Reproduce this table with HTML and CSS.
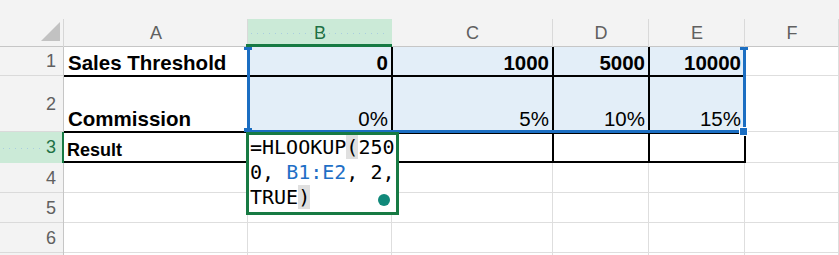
FILE: index.html
```html
<!DOCTYPE html>
<html lang="en">
<head>
<meta charset="utf-8">
<title>Commission lookup</title>
<link rel="stylesheet" href="styles.css">
</head>
<body>
<div class="sheet">
  <div class="grid">
    <div class="corner"><svg width="64" height="28" viewBox="0 0 64 28"><polygon points="41,22 60,22 60,3" fill="#c2c2c2"/></svg></div>
    <div class="ch">A</div>
    <div class="ch ch-on">B</div>
    <div class="ch">C</div>
    <div class="ch">D</div>
    <div class="ch">E</div>
    <div class="ch">F</div>

    <div class="rh">1</div>
    <div class="c bold kb">Sales Threshold</div>
    <div class="c bold sel num kb kr">0</div>
    <div class="c bold sel num kb kl kr">1000</div>
    <div class="c bold sel num kb kl kr">5000</div>
    <div class="c bold sel num kb kl">10000</div>
    <div class="c"></div>

    <div class="rh">2</div>
    <div class="c bold kt kb">Commission</div>
    <div class="c sel num kt kr">0%</div>
    <div class="c sel num kt kl kr">5%</div>
    <div class="c sel num kt kl kr">10%</div>
    <div class="c sel num kt kl">15%</div>
    <div class="c"></div>

    <div class="rh rh-on">3</div>
    <div class="c bold small kt kb2">Result</div>
    <div class="c"></div>
    <div class="c kt2 kb2 kl kr"></div>
    <div class="c kt2 kb2 kl kr"></div>
    <div class="c kt2 kb2 kl kr"></div>
    <div class="c kl"></div>

    <div class="rh">4</div>
    <div class="c"></div><div class="c"></div><div class="c"></div><div class="c"></div><div class="c"></div><div class="c"></div>

    <div class="rh">5</div>
    <div class="c"></div><div class="c"></div><div class="c"></div><div class="c"></div><div class="c"></div><div class="c"></div>

    <div class="rh">6</div>
    <div class="c"></div><div class="c"></div><div class="c"></div><div class="c"></div><div class="c"></div><div class="c"></div>

    <div class="rh"></div>
    <div class="c"></div><div class="c"></div><div class="c"></div><div class="c"></div><div class="c"></div><div class="c"></div>
  </div>

  <div class="selection"></div>
  <div class="handle handle-tl"></div>
  <div class="handle handle-tr"></div>
  <div class="handle handle-bl"></div>
  <div class="handle handle-br"></div>

  <div class="editor">
    <div class="fx">=HLOOKUP<span class="paren">(</span>250</div>
    <div class="fx">0, <span class="ref">B1:E2</span>, 2,</div>
    <div class="fx">TRUE<span class="paren">)</span></div>
    <span class="dot"></span>
  </div>
</div>
</body>
</html>
```

FILE: styles.css
```css
html, body {
  margin: 0;
  padding: 0;
  background: #ffffff;
  overflow: hidden;
}

.sheet {
  position: relative;
  width: 839px;
  height: 255px;
  overflow: hidden;
  background: linear-gradient(#f3f3f3 0 47px, #ffffff 47px);
  font-family: "Liberation Sans", Arial, sans-serif;
}

.grid {
  display: grid;
  grid-template-columns: 64px 184px 144px 161px 96px 96px 94px;
  grid-template-rows: 28px 29px 56px 31px 30px 30px 30px 30px;
  padding-top: 19px;
}

/* header row */
.corner {
  background: #f3f3f3;
  box-shadow: inset -1px 0 0 0 #d6d6d6, inset 0 -1px 0 0 #c6c6c6;
}
.corner svg { display: block; }

.ch {
  display: flex;
  align-items: center;
  justify-content: center;
  background: #f3f3f3;
  color: #606060;
  font-size: 18px;
  box-shadow: inset -1px 0 0 0 #d9d9d9, inset 0 -1px 0 0 #c6c6c6;
}

.ch-on {
  position: relative;
  background: #cbead7;
  color: #1e7145;
  box-shadow: none;
}
.ch-on::before {
  content: "";
  position: absolute;
  left: 0;
  right: 6px;
  top: 14px;
  height: 1px;
  background: repeating-linear-gradient(to right, transparent 0 3px, #a9cde0 3px 4px, transparent 4px 6px);
}
.ch-on::after {
  content: "";
  position: absolute;
  left: -2px;
  right: 0;
  bottom: 0;
  height: 3px;
  background: #177a43;
}

/* row header column */
.rh {
  display: flex;
  align-items: center;
  justify-content: flex-end;
  padding-right: 8px;
  background: #f3f3f3;
  color: #606060;
  font-size: 18px;
  box-shadow: inset -1px 0 0 0 #c6c6c6, inset 0 -1px 0 0 #dadada;
}

.rh-on {
  position: relative;
  background: #cbead7;
  color: #1e7145;
  box-shadow: inset -2px 0 0 0 #177a43;
}
.rh-on::before {
  content: "";
  position: absolute;
  left: 0;
  right: 24px;
  top: 16px;
  height: 1px;
  background: repeating-linear-gradient(to right, transparent 0 3px, #a9cde0 3px 4px, transparent 4px 6px);
}

/* cells */
.c {
  --t: 0px;
  --l: 0px;
  --r: 1px;
  --rc: #dedede;
  --b: 1px;
  --bc: #dedede;
  display: flex;
  align-items: flex-end;
  padding: 0 4px 3px 4px;
  font-size: 20.5px;
  line-height: 1;
  color: #000000;
  white-space: nowrap;
  box-shadow:
    inset 0 var(--t) 0 0 #000000,
    inset var(--l) 0 0 0 #000000,
    inset calc(var(--r) * -1) 0 0 0 var(--rc),
    inset 0 calc(var(--b) * -1) 0 0 var(--bc);
}

.bold { font-weight: 700; }
.small { font-size: 18px; padding-left: 3px; padding-bottom: 4px; }
.num { justify-content: flex-end; }
.sel { background: #e3eef8; }

.kt { --t: 1px; }
.kt2 { --t: 2px; }
.kl { --l: 1px; }
.kr { --r: 1px; --rc: #000000; }
.kb { --b: 1px; --bc: #000000; }
.kb2 { --b: 2px; --bc: #000000; }

/* selected range B1:E2 */
.selection {
  position: absolute;
  left: 247px;
  top: 47px;
  width: 499px;
  height: 86px;
  box-sizing: border-box;
  border: 3px solid #1b6ec2;
  border-top: none;
  z-index: 2;
}

.handle {
  position: absolute;
  background: #1b6ec2;
  z-index: 3;
}
.handle-tl { left: 244px; top: 47px; width: 8px; height: 3px; }
.handle-tr { left: 740px; top: 47px; width: 8px; height: 3px; }
.handle-bl { left: 244px; top: 128px; width: 8px; height: 4px; }
.handle-br {
  left: 739px;
  top: 127px;
  width: 7px;
  height: 7px;
  border: 1px solid #ffffff;
}

/* in-cell formula editor on B3 */
.editor {
  position: absolute;
  left: 246px;
  top: 132px;
  width: 153px;
  height: 83px;
  box-sizing: border-box;
  border: 3px solid #177a43;
  background: #ffffff;
  z-index: 4;
  font-family: "DejaVu Sans Mono", "Liberation Mono", monospace;
  font-size: 20px;
  line-height: 25px;
  color: #000000;
  padding-left: 1px;
}

.fx { white-space: pre; }
.paren { background: #e0e0e0; }
.ref { color: #1f6fc6; }

.dot {
  position: absolute;
  right: 6px;
  bottom: 6px;
  width: 12px;
  height: 12px;
  border-radius: 50%;
  background: #11897a;
}
```
